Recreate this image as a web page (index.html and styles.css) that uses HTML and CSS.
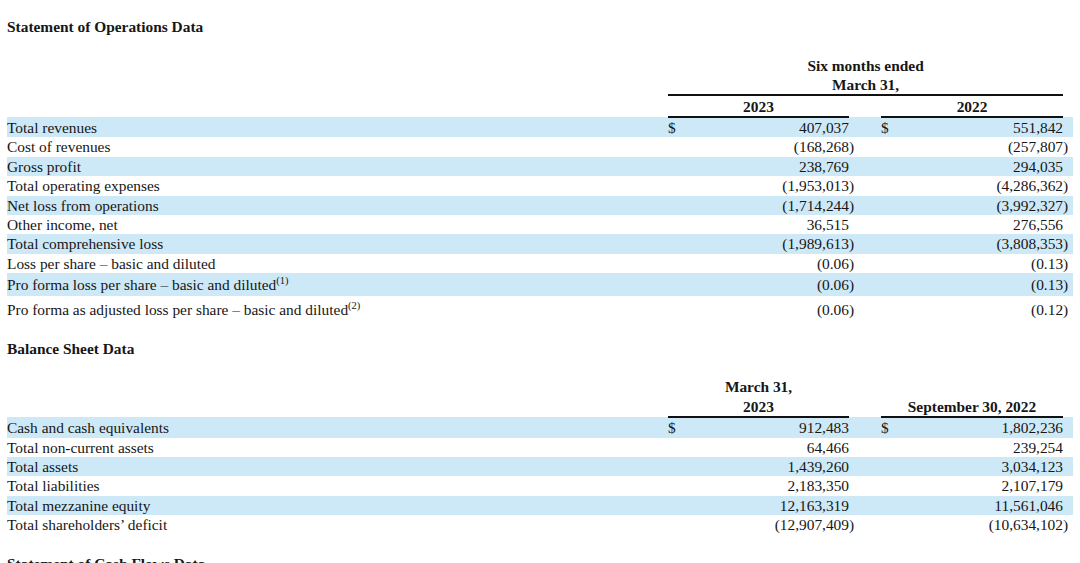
FILE: index.html
```html
<!DOCTYPE html>
<html>
<head>
<meta charset="utf-8">
<link rel="stylesheet" href="styles.css">
</head>
<body>
<div class="page">
  <h2 class="section-title first">Statement of Operations Data</h2>
  <table class="fin">
    <colgroup>
      <col class="c-label"><col class="c-dollar"><col class="c-val1"><col class="c-paren1"><col class="c-gap"><col class="c-dollar"><col class="c-val2"><col class="c-paren2">
    </colgroup>
    <thead>
      <tr class="hrow">
        <th></th>
        <th colspan="6" class="hcenter">Six months ended</th>
        <th></th>
      </tr>
      <tr class="hrow">
        <th></th>
        <th colspan="6" class="hcenter ruled">March 31,</th>
        <th></th>
      </tr>
      <tr class="hrow last">
        <th></th>
        <th colspan="2" class="hcenter ruled">2023</th>
        <th></th><th></th>
        <th colspan="2" class="hcenter ruled">2022</th>
        <th></th>
      </tr>
    </thead>
    <tbody>
      <tr class="band"><td class="label">Total revenues</td><td class="dollar">$</td><td class="num">407,037</td><td></td><td></td><td class="dollar">$</td><td class="num">551,842</td><td></td></tr>
      <tr><td class="label">Cost of revenues</td><td></td><td class="num">(168,268</td><td class="paren">)</td><td></td><td></td><td class="num">(257,807</td><td class="paren">)</td></tr>
      <tr class="band"><td class="label">Gross profit</td><td></td><td class="num">238,769</td><td></td><td></td><td></td><td class="num">294,035</td><td></td></tr>
      <tr><td class="label">Total operating expenses</td><td></td><td class="num">(1,953,013</td><td class="paren">)</td><td></td><td></td><td class="num">(4,286,362</td><td class="paren">)</td></tr>
      <tr class="band"><td class="label">Net loss from operations</td><td></td><td class="num">(1,714,244</td><td class="paren">)</td><td></td><td></td><td class="num">(3,992,327</td><td class="paren">)</td></tr>
      <tr><td class="label">Other income, net</td><td></td><td class="num">36,515</td><td></td><td></td><td></td><td class="num">276,556</td><td></td></tr>
      <tr class="band"><td class="label">Total comprehensive loss</td><td></td><td class="num">(1,989,613</td><td class="paren">)</td><td></td><td></td><td class="num">(3,808,353</td><td class="paren">)</td></tr>
      <tr><td class="label">Loss per share – basic and diluted</td><td></td><td class="num">(0.06</td><td class="paren">)</td><td></td><td></td><td class="num">(0.13</td><td class="paren">)</td></tr>
      <tr class="band tall"><td class="label">Pro forma loss per share – basic and diluted<sup>(1)</sup></td><td></td><td class="num">(0.06</td><td class="paren">)</td><td></td><td></td><td class="num">(0.13</td><td class="paren">)</td></tr>
      <tr class="taller"><td class="label">Pro forma as adjusted loss per share – basic and diluted<sup>(2)</sup></td><td></td><td class="num">(0.06</td><td class="paren">)</td><td></td><td></td><td class="num">(0.12</td><td class="paren">)</td></tr>
    </tbody>
  </table>

  <h2 class="section-title second">Balance Sheet Data</h2>
  <table class="fin">
    <colgroup>
      <col class="c-label"><col class="c-dollar"><col class="c-val1"><col class="c-paren1"><col class="c-gap"><col class="c-dollar"><col class="c-val2"><col class="c-paren2">
    </colgroup>
    <thead>
      <tr class="hrow">
        <th></th>
        <th colspan="2" class="hcenter">March 31,</th>
        <th></th><th></th>
        <th colspan="2"></th>
        <th></th>
      </tr>
      <tr class="hrow last">
        <th></th>
        <th colspan="2" class="hcenter ruled">2023</th>
        <th></th><th></th>
        <th colspan="2" class="hcenter ruled">September 30, 2022</th>
        <th></th>
      </tr>
    </thead>
    <tbody>
      <tr class="band"><td class="label">Cash and cash equivalents</td><td class="dollar">$</td><td class="num">912,483</td><td></td><td></td><td class="dollar">$</td><td class="num">1,802,236</td><td></td></tr>
      <tr><td class="label">Total non-current assets</td><td></td><td class="num">64,466</td><td></td><td></td><td></td><td class="num">239,254</td><td></td></tr>
      <tr class="band"><td class="label">Total assets</td><td></td><td class="num">1,439,260</td><td></td><td></td><td></td><td class="num">3,034,123</td><td></td></tr>
      <tr><td class="label">Total liabilities</td><td></td><td class="num">2,183,350</td><td></td><td></td><td></td><td class="num">2,107,179</td><td></td></tr>
      <tr class="band"><td class="label">Total mezzanine equity</td><td></td><td class="num">12,163,319</td><td></td><td></td><td></td><td class="num">11,561,046</td><td></td></tr>
      <tr><td class="label">Total shareholders’ deficit</td><td></td><td class="num">(12,907,409</td><td class="paren">)</td><td></td><td></td><td class="num">(10,634,102</td><td class="paren">)</td></tr>
    </tbody>
  </table>

  <h2 class="section-title third">Statement of Cash Flows Data</h2>
</div>
</body>
</html>
```

FILE: styles.css
```css
html, body {
  margin: 0;
  padding: 0;
  background: #ffffff;
}

body {
  font-family: "Liberation Serif", "Times New Roman", serif;
  font-size: 15.4px;
  color: #161616;
  overflow: hidden;
}

.page {
  padding: 0 7px;
  width: 1066px;
}

.section-title {
  font-size: 15.4px;
  font-weight: bold;
  line-height: 19px;
  margin: 0;
}

.section-title.first {
  padding-top: 17px;
  margin-bottom: 20px;
}

.section-title.second {
  margin-top: 17px;
  margin-bottom: 19px;
}

.section-title.third {
  margin-top: 19px;
}

.fin {
  border-collapse: collapse;
  table-layout: fixed;
  width: 1066px;
}

.c-label { width: 661px; }
.c-dollar { width: 20px; }
.c-val1 { width: 161px; }
.c-paren1 { width: 6px; }
.c-gap { width: 26px; }
.c-val2 { width: 162px; }
.c-paren2 { width: 10px; }

.fin th, .fin td {
  padding: 0;
  line-height: 19.4px;
  height: 19.4px;
  white-space: nowrap;
  vertical-align: middle;
}

.fin th {
  font-weight: bold;
}

.hrow th {
  height: 19px;
  line-height: 19px;
  vertical-align: bottom;
}

.hrow.last th {
  height: 20px;
}

.hcenter {
  text-align: center;
}

.ruled {
  border-bottom: 2px solid #111;
}

.band td {
  background: #cde9f8;
}

.label {
  text-align: left;
  overflow: hidden;
}

.dollar {
  text-align: left;
  padding-left: 2px;
}

.num {
  text-align: right;
}

.paren {
  text-align: left;
}

.tall td {
  height: 23px;
}

.taller td {
  height: 26px;
}

sup {
  font-size: 10.5px;
  line-height: 0;
  vertical-align: 6px;
}
```
